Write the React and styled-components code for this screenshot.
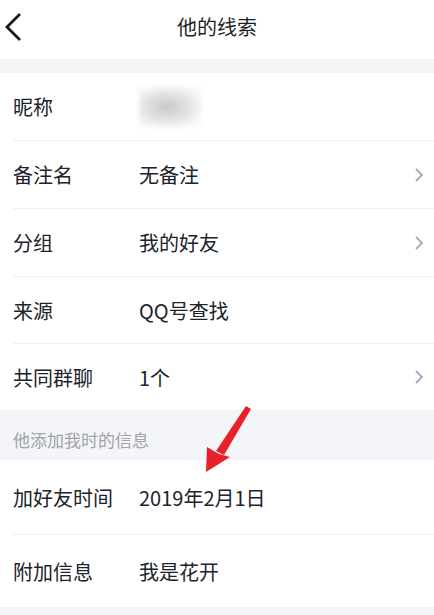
import React from "react";
import styled, { createGlobalStyle } from "styled-components";

const GlobalStyle = createGlobalStyle`
  body {
    margin: 0;
    background: #f4f5f8;
    font-family: "Noto Sans CJK SC", "Noto Sans", sans-serif;
  }
`;

const Page = styled.div`
  position: relative;
  width: 434px;
  height: 615px;
  overflow: hidden;
  background: #f4f5f8;
`;

const Header = styled.header`
  display: flex;
  align-items: center;
  justify-content: center;
  position: relative;
  height: 59px;
  margin-bottom: 14px;
  background: #ffffff;
`;

const BackButton = styled.div`
  position: absolute;
  left: 3px;
  top: 11px;
  width: 20px;
  height: 32px;
  display: flex;
`;

const Title = styled.h1`
  margin: 0;
  margin-top: -6px;
  font-size: 20px;
  font-weight: 400;
  color: #1d1f26;
`;

const Group = styled.section`
  background: #ffffff;
  padding-left: 13px;
`;

const Row = styled.div`
  display: flex;
  align-items: center;
  box-sizing: border-box;
  height: ${(p) => p.$h}px;
  border-bottom: ${(p) => (p.$last ? "none" : "1px solid #eff0f3")};
  padding-right: 10px;
`;

const Label = styled.span`
  width: 126px;
  flex-shrink: 0;
  font-size: 20px;
  color: #20232b;
`;

const Value = styled.span`
  flex: 1;
  font-size: 20px;
  color: #20232b;
`;

const Blurred = styled.div`
  width: 62px;
  height: 40px;
  background: radial-gradient(ellipse at 45% 50%, #c8c8ca 0%, #dcdcde 35%, #f5f5f6 75%, #fbfbfb 100%);
  filter: blur(2px);
`;

const Chevron = styled.svg`
  width: 10px;
  height: 16px;
  flex-shrink: 0;
`;

const SectionTitle = styled.div`
  height: 50px;
  display: flex;
  align-items: flex-end;
  padding: 0 13px 8px;
  box-sizing: border-box;
  font-size: 17px;
  color: #a0a3ab;
`;

const Arrow = styled.svg`
  position: absolute;
  left: 200px;
  top: 402px;
  width: 56px;
  height: 76px;
`;

const Arrowhead = () => (
  <Chevron viewBox="0 0 10 16">
    <path d="M2 2 L8 8 L2 14" fill="none" stroke="#a3a8ba" strokeWidth="1.8" />
  </Chevron>
);

const profile = [
  { label: "昵称", blur: true, h: 68 },
  { label: "备注名", value: "无备注", link: true, h: 68 },
  { label: "分组", value: "我的好友", link: true, h: 68 },
  { label: "来源", value: "QQ号查找", h: 67 },
  { label: "共同群聊", value: "1个", link: true, h: 66 },
];

const extra = [
  { label: "加好友时间", value: "2019年2月1日", h: 75 },
  { label: "附加信息", value: "我是花开", h: 72 },
];

export default function App() {
  return (
    <Page>
      <GlobalStyle />
      <Header>
        <BackButton>
          <svg width="20" height="32" viewBox="0 0 20 32">
            <path d="M17 3 L4 16 L17 29" fill="none" stroke="#16181d" strokeWidth="2.8" />
          </svg>
        </BackButton>
        <Title>他的线索</Title>
      </Header>

      <Group>
        {profile.map((item, i) => (
          <Row key={item.label} $h={item.h} $last={i === profile.length - 1}>
            <Label>{item.label}</Label>
            <Value>{item.blur ? <Blurred /> : item.value}</Value>
            {item.link && <Arrowhead />}
          </Row>
        ))}
      </Group>

      <SectionTitle>他添加我时的信息</SectionTitle>

      <Group>
        {extra.map((item, i) => (
          <Row key={item.label} $h={item.h} $last={i === extra.length - 1}>
            <Label>{item.label}</Label>
            <Value>{item.value}</Value>
          </Row>
        ))}
      </Group>

      <Arrow viewBox="0 0 56 76">
        <path d="M46 4 L51 7 L24 53 L16 49 Z" fill="#e8202a" />
        <path d="M6 70 L7 45 L19 52 L30 55 Z" fill="#e8202a" />
      </Arrow>
    </Page>
  );
}
